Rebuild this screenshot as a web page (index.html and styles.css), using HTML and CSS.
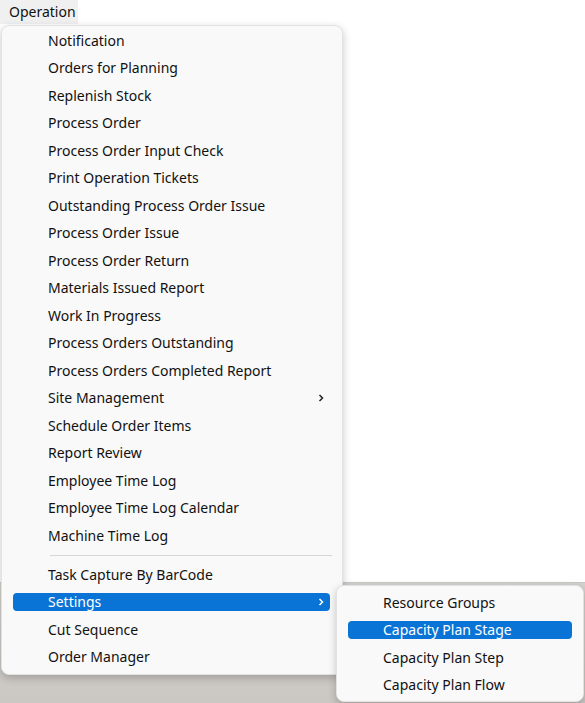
FILE: index.html
```html
<!DOCTYPE html>
<html>
<head>
<meta charset="utf-8">
<link rel="stylesheet" href="styles.css">
</head>
<body>
<div class="screen">
  <div class="window">
    <div class="menubar">
      <div class="menubar-item">Operation</div>
    </div>
  </div>
  <div class="desk"></div>

  <div class="menu main-menu">
    <div class="item">Notification</div>
    <div class="item">Orders for Planning</div>
    <div class="item">Replenish Stock</div>
    <div class="item">Process Order</div>
    <div class="item">Process Order Input Check</div>
    <div class="item">Print Operation Tickets</div>
    <div class="item">Outstanding Process Order Issue</div>
    <div class="item">Process Order Issue</div>
    <div class="item">Process Order Return</div>
    <div class="item">Materials Issued Report</div>
    <div class="item">Work In Progress</div>
    <div class="item">Process Orders Outstanding</div>
    <div class="item">Process Orders Completed Report</div>
    <div class="item has-sub"><span>Site Management</span><svg class="chev" width="8" height="10" viewBox="0 0 8 10"><path d="M2.5 2 L5.5 5 L2.5 8" fill="none" stroke="currentColor" stroke-width="1.5"/></svg></div>
    <div class="item">Schedule Order Items</div>
    <div class="item">Report Review</div>
    <div class="item">Employee Time Log</div>
    <div class="item">Employee Time Log Calendar</div>
    <div class="item">Machine Time Log</div>
    <div class="sep"></div>
    <div class="item">Task Capture By BarCode</div>
    <div class="item has-sub active"><span>Settings</span><svg class="chev" width="8" height="10" viewBox="0 0 8 10"><path d="M2.5 2 L5.5 5 L2.5 8" fill="none" stroke="currentColor" stroke-width="1.5"/></svg></div>
    <div class="item">Cut Sequence</div>
    <div class="item">Order Manager</div>
  </div>

  <div class="menu sub-menu">
    <div class="item">Resource Groups</div>
    <div class="item active">Capacity Plan Stage</div>
    <div class="item">Capacity Plan Step</div>
    <div class="item">Capacity Plan Flow</div>
  </div>
</div>
</body>
</html>
```
FILE: styles.css
```css
* { box-sizing: border-box; }
html, body { margin: 0; padding: 0; }
body {
  width: 585px;
  height: 703px;
  overflow: hidden;
  font-family: "Segoe UI", "Noto Sans", "Open Sans", sans-serif;
  font-size: 14px;
  color: #111111;
  background: #ccc8c4;
}
.screen {
  position: relative;
  width: 585px;
  height: 703px;
}
.window {
  height: 583px;
  background: #ffffff;
  border-bottom: 1px solid #c8c8c8;
}
.desk {
  height: 120px;
  background: linear-gradient(#d6d3cf, #cbc7c3);
}
.menubar {
  display: flex;
  height: 24px;
}
.menubar-item {
  background: #f0f0f0;
  padding: 2px 9px 0 9px;
  width: 78px;
  line-height: 20px;
  color: #111111;
}
.menu {
  position: absolute;
  background: #f9f9f9;
  border: 1px solid #e2e2e2;
  border-radius: 8px;
  box-shadow: 0 3px 8px rgba(0,0,0,0.22);
  display: flex;
  flex-direction: column;
}
.main-menu {
  left: 1px;
  top: 25px;
  width: 342px;
  padding: 1px 0 3px 0;
}
.sub-menu {
  left: 336px;
  top: 585px;
  width: 248px;
  padding: 3px 0 2px 0;
}
.item {
  height: 27.5px;
  display: flex;
  align-items: center;
  justify-content: space-between;
  margin: 0 12px 0 11px;
  padding: 0 5px 0 35px;
  border-radius: 4px;
  white-space: nowrap;
  line-height: 18px;
}
.sub-menu .item {
  margin-right: 11px;
}
.item.active {
  background: #0a74d6;
  color: #ffffff;
  height: 18px;
  margin-top: 4.75px;
  margin-bottom: 4.75px;
}
.sep {
  height: 1px;
  background: #d6d6d6;
  margin: 5px 10px 5.5px 48px;
}
.chev {
  display: block;
  color: #222;
}
.item.active .chev { color: #ffffff; }
```
